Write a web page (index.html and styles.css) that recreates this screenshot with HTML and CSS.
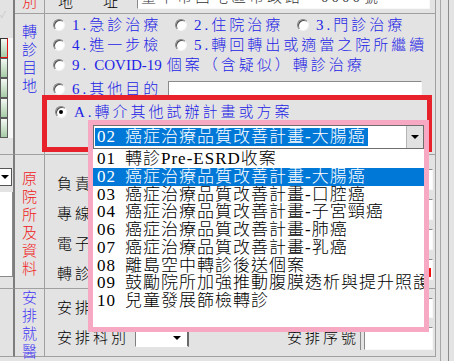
FILE: index.html
```html
<!DOCTYPE html>
<html lang="zh-TW">
<head>
  <meta charset="UTF-8">
  <meta name="viewport" content="width=device-width, initial-scale=1.0">
  <title>轉診單</title>
  <link rel="stylesheet" href="styles.css">
</head>
<body>
  <div class="window">
    <div class="form">
      <!-- 左側清單 -->
      <div class="side side-top">
        <div class="check">✓</div>
        <div class="btns">
          <div class="btn on"></div>
          <div class="btn"></div>
          <div class="btn"></div>
          <div class="btn"></div>
          <div class="btn"></div>
        </div>
      </div>
      <div class="label top-label red"><div class="clip">別</div></div>
      <div class="main addr">
        <div class="clip addr-row">
          <span class="addr-name">地</span>
          <span class="addr-name">址</span>
          <div class="input addr-input">臺中市西屯區市政路　0000號</div>
        </div>
      </div>

      <!-- 轉診目地 -->
      <div class="label sec1-label blue">轉<br>診<br>目<br>地</div>
      <div class="main sec1">
        <div class="radios">
          <div class="opt"><span class="radio"></span>1.急診治療</div>
          <div class="opt"><span class="radio"></span>2.住院治療</div>
          <div class="opt"><span class="radio"></span>3.門診治療</div>
          <div class="opt"><span class="radio"></span>4.進一步檢</div>
          <div class="opt wide"><span class="radio"></span>5.轉回轉出或適當之院所繼續</div>
          <div class="opt full"><span class="radio"></span>9.<span class="en">COVID-19</span>個案（含疑似）轉診治療</div>
        </div>
        <div class="other">
          <div class="opt"><span class="radio"></span>6.其他目的</div>
          <div class="input other-input"></div>
        </div>
        <div class="opt plan"><span class="radio checked"></span>A.轉介其他試辦計畫或方案</div>
      </div>

      <!-- 原院所及資料 -->
      <div class="side side-mid">
        <div class="mini-select"><span class="tri"></span></div>
        <div class="mini-box"></div>
      </div>
      <div class="label sec2-label red">原<br>院<br>所<br>及<br>資<br>料</div>
      <div class="main sec2">
        <div class="row"><span class="name">負責</span><div class="input"></div></div>
        <div class="row"><span class="name">專線</span><div class="input"></div></div>
        <div class="row"><span class="name">電子</span><div class="input"></div></div>
        <div class="row"><span class="name">轉診</span><div class="input flag"><span class="flag-mark"></span></div></div>
      </div>

      <!-- 安排就醫 -->
      <div class="side"></div>
      <div class="label sec3-label violet">安<br>排<br>就<br>醫</div>
      <div class="main sec3">
        <div class="row first"><span class="name">安排</span><div class="input"></div></div>
        <div class="row second">
          <span class="name">安排科別</span>
          <div class="dept"><span class="tri"></span></div>
          <span class="name seq">安排序號</span>
          <div class="seq-box"><div class="input seq-input"></div></div>
        </div>
      </div>
    </div>
    <div class="rail"><div class="rail-line"></div></div>
  </div>

  <div class="mark"></div>

  <div class="popup">
    <div class="combo">
      <div class="combo-text"><span class="sel"><span class="no">02</span>癌症治療品質改善計畫-大腸癌</span></div>
      <div class="combo-btn"><span class="tri"></span></div>
    </div>
    <ul class="list">
      <li><span class="no">01</span>轉診Pre-ESRD收案</li>
      <li class="on"><span class="no">02</span>癌症治療品質改善計畫-大腸癌</li>
      <li><span class="no">03</span>癌症治療品質改善計畫-口腔癌</li>
      <li><span class="no">04</span>癌症治療品質改善計畫-子宮頸癌</li>
      <li><span class="no">06</span>癌症治療品質改善計畫-肺癌</li>
      <li><span class="no">07</span>癌症治療品質改善計畫-乳癌</li>
      <li><span class="no">08</span>離島空中轉診後送個案</li>
      <li><span class="no">09</span>鼓勵院所加強推動腹膜透析與提升照護</li>
      <li><span class="no">10</span>兒童發展篩檢轉診</li>
    </ul>
  </div>
</body>
</html>
```

FILE: styles.css
```css
* {
  box-sizing: border-box;
}
body {
  margin: 0;
  width: 454px;
  height: 361px;
  overflow: hidden;
  position: relative;
  background: #e3e3e3;
  font-family: "Liberation Serif", "Noto Sans CJK TC", serif;
  font-size: 15px;
  font-weight: 300;
  letter-spacing: 3px;
  color: #000;
}
.window {
  display: flex;
  height: 361px;
}
.form {
  display: grid;
  grid-template-columns: 15px 30px 391px;
  grid-template-rows: 14px 141px 134px 68px;
  align-content: start;
}
.side {
  border-right: 2px solid #7d7d7d;
  border-bottom: 1px solid #a0a0a0;
}
.side-top {
  grid-row: 1 / 3;
}
.check {
  height: 38px;
  padding-top: 10px;
  font-family: "DejaVu Sans", sans-serif;
  font-size: 9px;
  line-height: 10px;
  letter-spacing: 0;
  color: #c9c9c9;
}
.btns {
  width: 13px;
  background: #f7f7f7;
}
.btn {
  width: 8px;
  height: 20px;
  border: 1px solid #5a5a5a;
  background: linear-gradient(#f4f9f4, #a6cba6);
}
.btn.on {
  border-color: #333 #e01010 #e01010 #333;
}
.mini-select {
  width: 12px;
  height: 18px;
  margin-top: 13px;
  background: #fff;
  border: 1px solid #555;
  border-left: none;
  display: flex;
  align-items: center;
  padding-left: 1px;
}
.mini-box {
  width: 13px;
  height: 85px;
  margin-top: 6px;
  background: #fff;
  border-right: 1px solid #8a8a8a;
  border-bottom: 1px solid #8a8a8a;
}
.tri {
  width: 0;
  height: 0;
  border-left: 4px solid transparent;
  border-right: 4px solid transparent;
  border-top: 4px solid #000;
}
.label {
  border-right: 1px solid #a0a0a0;
  border-bottom: 1px solid #a0a0a0;
  text-align: center;
  line-height: 18px;
  letter-spacing: 0;
}
.main {
  border-right: 1px solid #a0a0a0;
  border-bottom: 1px solid #a0a0a0;
}
.red {
  color: #f01818;
}
.blue {
  color: #2525e8;
}
.violet {
  color: #4638f2;
}
.top-label,
.addr {
  overflow: hidden;
}
.clip {
  margin-top: -7px;
}
.addr-row {
  display: flex;
  align-items: flex-start;
  padding-left: 13px;
  line-height: 18px;
}
.addr-name:first-child {
  margin-right: 27px;
}
.addr-input {
  width: 293px;
  height: 22px;
  margin-left: 16px;
  margin-top: -6px;
  padding: 0 3px;
  line-height: 18px;
  white-space: nowrap;
  overflow: hidden;
  color: #333;
}
.input {
  background: #fff;
  border: 1px solid;
  border-color: #8a8a8a #f8f8f8 #f8f8f8 #8a8a8a;
}
.sec1-label {
  padding-top: 9px;
}
.sec2-label {
  padding-top: 15px;
}
.sec1 {
  padding: 1px 0 0 8px;
}
.radios {
  display: grid;
  grid-template-columns: repeat(3, 122px);
  grid-auto-rows: 20px;
}
.opt {
  display: flex;
  align-items: center;
  gap: 7px;
  white-space: nowrap;
  color: #2323e6;
  line-height: 20px;
}
.wide {
  grid-column: span 2;
}
.full {
  grid-column: span 3;
}
.en {
  letter-spacing: 0;
  margin: 0 -2px 0 -2px;
}
.other {
  display: grid;
  grid-template-columns: 115px 254px;
  align-items: center;
  height: 24px;
  margin-top: 2px;
}
.other-input {
  height: 16px;
}
.plan {
  height: 20px;
  margin-top: 1px;
  padding-left: 2px;
}
.radio {
  flex: none;
  position: relative;
  width: 12px;
  height: 12px;
  border-radius: 50%;
  background: #fff;
  border: 1px solid;
  border-color: #858585 #f4f4f4 #f4f4f4 #858585;
  box-shadow: inset 1px 1px 0 #505050;
}
.radio.checked::after {
  content: "";
  position: absolute;
  left: 3px;
  top: 3px;
  width: 4px;
  height: 4px;
  border-radius: 50%;
  background: #000;
}
.sec2 {
  padding: 14px 2px 0 12px;
}
.row {
  display: flex;
  height: 30px;
}
.name {
  flex: none;
  line-height: 30px;
  white-space: nowrap;
}
.sec2 .name {
  width: 80px;
}
.sec2 .input {
  flex: 1;
  height: 21px;
}
.flag {
  display: flex;
  justify-content: flex-end;
  align-items: flex-end;
  padding: 0 1px 2px 0;
}
.flag-mark {
  width: 3px;
  height: 9px;
  background: #f01010;
}
.sec3 {
  padding: 6px 2px 0 12px;
}
.sec3 .first {
  height: 26px;
  align-items: center;
}
.sec3 .first .name {
  width: 80px;
  line-height: 26px;
}
.sec3 .first .input {
  flex: 1;
  height: 20px;
}
.second {
  height: 34px;
  align-items: center;
}
.second .name {
  line-height: 34px;
}
.dept {
  width: 54px;
  height: 17px;
  margin-left: 6px;
  background: #fff;
  border: 1px solid;
  border-color: #808080 #6a6a6a #fff #808080;
  border-right-width: 2px;
  display: flex;
  justify-content: flex-end;
  align-items: center;
  padding-right: 6px;
}
.seq {
  margin-left: auto;
}
.seq-box {
  height: 23px;
  margin-left: 1px;
  padding-left: 3px;
  border-left: 1px solid #8a8a8a;
}
.seq-input {
  width: 69px;
  height: 23px;
}
.rail {
  width: 18px;
  padding-left: 4px;
}
.rail-line {
  width: 9px;
  height: 100%;
  border-left: 1px solid #a6a6a6;
  border-right: 1px solid #8c8c8c;
}
.mark {
  position: absolute;
  left: 42px;
  top: 95px;
  width: 390px;
  height: 57px;
  border: 5px solid #e8222b;
  z-index: 2;
}
.popup {
  position: absolute;
  left: 88px;
  top: 120px;
  width: 341px;
  height: 212px;
  border: 5px solid #f7a9c4;
  background: #fff;
  z-index: 3;
  font-size: 17px;
  letter-spacing: 1px;
}
.combo {
  display: flex;
  height: 24px;
  border: 1px solid #6e6e6e;
}
.combo-text {
  flex: 1;
  padding: 1px 0 0 1px;
  overflow: hidden;
}
.sel {
  display: inline-block;
  height: 18px;
  padding: 0 2px;
  line-height: 18px;
  background: #0078d7;
  color: #fff;
  white-space: nowrap;
}
.combo-btn {
  width: 17px;
  background: #e1e1e1;
  border-left: 1px solid #b5b5b5;
  display: flex;
  align-items: center;
  justify-content: center;
}
.no {
  display: inline-block;
  width: 28px;
}
.list {
  list-style: none;
  margin: 1px 0 0;
  padding: 0;
}
.list li {
  height: 17.75px;
  line-height: 17.75px;
  padding-left: 4px;
  white-space: nowrap;
  overflow: hidden;
}
.list li.on {
  background: #0078d7;
  color: #fff;
}
```
